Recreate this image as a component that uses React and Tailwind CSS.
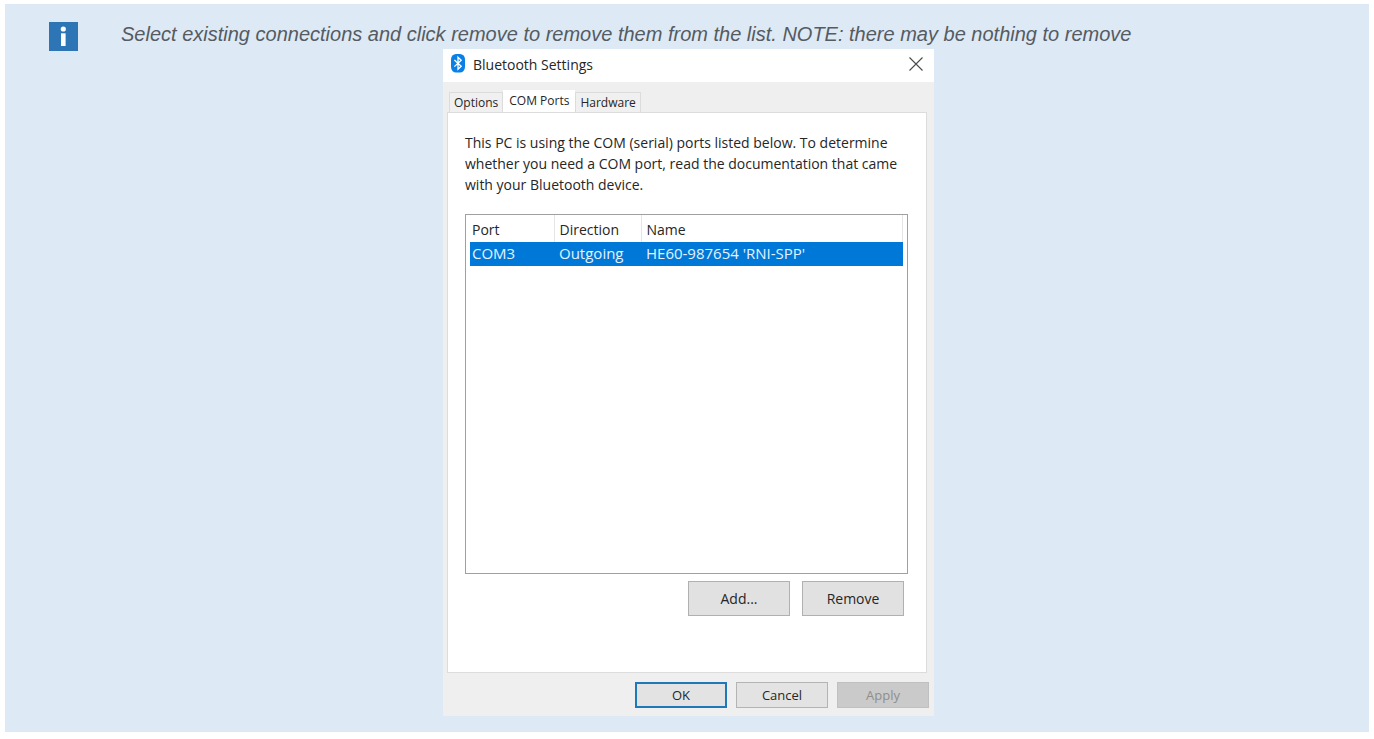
import { useState } from 'react';

const tabs = ['Options', 'COM Ports', 'Hardware'];

const ports = [
  { port: 'COM3', direction: 'Outgoing', name: "HE60-987654 'RNI-SPP'" },
];

function InfoIcon() {
  return (
    <svg className="h-[29px] w-[29px] shrink-0" viewBox="0 0 29 29" role="img" aria-label="Info">
      <rect width="29" height="29" fill="#2e75b6" />
      <circle cx="14.3" cy="7" r="2.6" fill="#fff" />
      <rect x="12" y="11.3" width="4.6" height="12.7" fill="#fff" />
    </svg>
  );
}

function BluetoothIcon() {
  return (
    <svg className="h-[19px] w-[14px] shrink-0" viewBox="0 0 14 19" aria-hidden="true">
      <rect width="14" height="18.5" rx="5" ry="5.5" fill="#0a80e6" />
      <path
        d="M3.4 5.9 10.2 12.2 7 15.2V3.2l3.2 3-6.8 6.4"
        fill="none"
        stroke="#fff"
        strokeWidth="1.3"
      />
    </svg>
  );
}

function CloseIcon() {
  return (
    <svg className="h-[14px] w-[14px]" viewBox="0 0 14 14" aria-hidden="true">
      <path d="M.5.5l13 13M13.5.5l-13 13" fill="none" stroke="#4a4a4a" strokeWidth="1.1" />
    </svg>
  );
}

function BluetoothDialog() {
  const [activeTab, setActiveTab] = useState('COM Ports');

  return (
    <section
      aria-label="Bluetooth Settings"
      className="w-full max-w-[491px] bg-[#efefef] font-['Open_Sans','Noto_Sans',sans-serif] text-sm text-[#262626]"
    >
      {/* Title bar */}
      <header className="flex h-[33px] items-start justify-between bg-white pt-[5px] pr-[11px] pl-2">
        <div className="flex items-start gap-2">
          <BluetoothIcon />
          <h1 className="text-sm leading-[22px]">Bluetooth Settings</h1>
        </div>
        <button type="button" aria-label="Close" className="pt-[3px]">
          <CloseIcon />
        </button>
      </header>

      <div className="px-1 pt-2">
        {/* Tabs */}
        <div role="tablist" className="flex h-[22px] items-end pl-[2px]">
          {tabs.map((tab) => (
            <button
              key={tab}
              type="button"
              role="tab"
              aria-selected={tab === activeTab}
              onClick={() => setActiveTab(tab)}
              className={`text-xs leading-5 whitespace-nowrap ${
                tab === activeTab
                  ? 'h-[22px] bg-white px-[6px]'
                  : 'h-5 border border-b-0 border-[#dcdcdc] bg-[#f0f0f0] px-1'
              }`}
            >
              {tab}
            </button>
          ))}
        </div>

        {/* Tab page */}
        <div role="tabpanel" className="mr-[3px] border border-[#dcdcdc] bg-white pt-[19px] pr-[18px] pb-14 pl-[17px]">
          <p className="leading-[21px]">
            This PC is using the COM (serial) ports listed below. To determine
            whether you need a COM port, read the documentation that came
            with your Bluetooth device.
          </p>

          <div className="mt-[19px] h-[360px] border border-[#a0a0a0] px-1">
            <table className="w-full table-fixed text-left">
              <thead>
                <tr className="h-[27px]">
                  <th className="w-[84px] border-r border-[#e5e5e5] pt-[2px] pl-[2px] font-normal">Port</th>
                  <th className="w-[87px] border-r border-[#e5e5e5] pt-[2px] pl-[5px] font-normal">Direction</th>
                  <th className="border-r border-[#e5e5e5] pt-[2px] pl-[5px] font-normal">Name</th>
                </tr>
              </thead>
              <tbody className="text-[15px]">
                {ports.map((row) => (
                  <tr key={row.port} className="h-6 bg-[#0078d7] text-[#e3f3ff]">
                    <td className="pl-[2px]">{row.port}</td>
                    <td className="pl-[5px]">{row.direction}</td>
                    <td className="pl-[5px]">{row.name}</td>
                  </tr>
                ))}
              </tbody>
            </table>
          </div>

          <div className="mt-[7px] flex justify-end gap-3 pr-1">
            <button type="button" className="h-[35px] w-[102px] border border-[#b0b0b0] bg-[#e1e1e1]">
              Add...
            </button>
            <button type="button" className="h-[35px] w-[102px] border border-[#b0b0b0] bg-[#e1e1e1]">
              Remove
            </button>
          </div>
        </div>
      </div>

      {/* Dialog buttons */}
      <footer className="flex justify-end gap-[9px] pt-[9px] pr-[5px] pb-2 text-[13px]">
        <button type="button" className="h-[26px] w-[92px] border-2 border-[#1f78b8] bg-[#e3e3e3]">
          OK
        </button>
        <button type="button" className="h-[26px] w-[92px] border border-[#b4b4b4] bg-[#e3e3e3]">
          Cancel
        </button>
        <button type="button" disabled className="h-[26px] w-[92px] border border-[#c0c0c0] bg-[#cacaca] text-[#8e8e8e]">
          Apply
        </button>
      </footer>
    </section>
  );
}

function App() {
  return (
    <main className="bg-white px-[5px] pt-1 pb-[7px]">
      <div className="bg-[#dde9f5] pb-4">
        <div className="flex h-[45px] items-start gap-[43px] pt-[18px] pl-11">
          <InfoIcon />
          <p className="font-['Liberation_Sans',Arial,sans-serif] text-xl leading-6 text-[#555b62] italic">
            Select existing connections and click remove to remove them from the list. NOTE: there may be nothing to remove
          </p>
        </div>
        <div className="flex justify-center pl-[3px]">
          <BluetoothDialog />
        </div>
      </div>
    </main>
  );
}

export default App;
